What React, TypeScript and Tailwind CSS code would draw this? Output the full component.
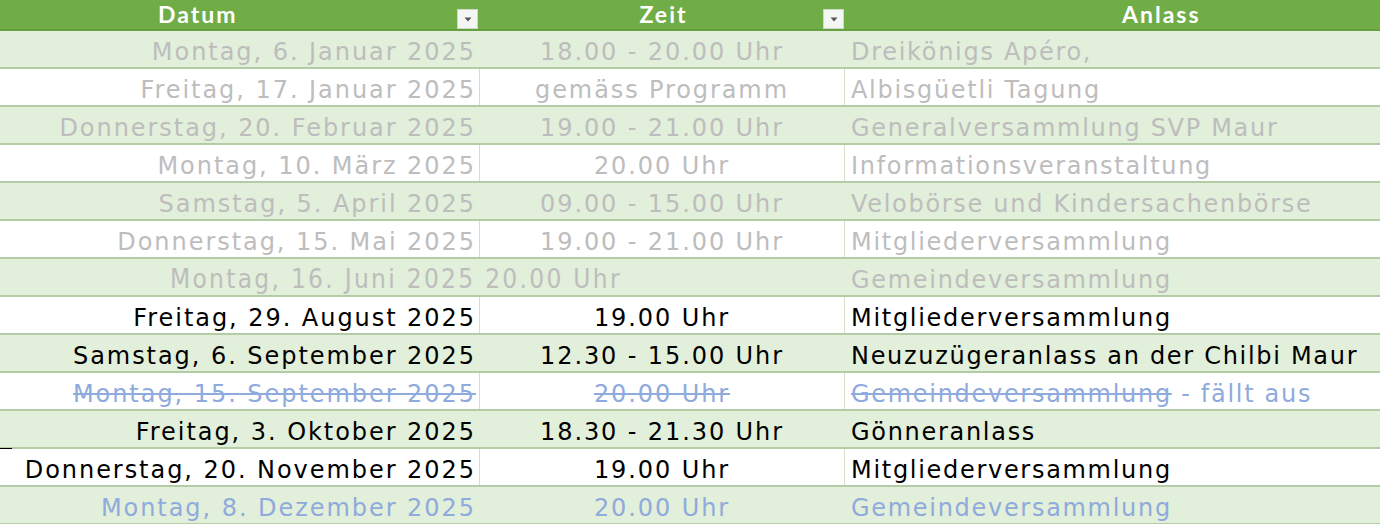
import React from "react";

type Row = {
  date: string;
  time: string;
  event: React.ReactNode;
  tone: "past" | "now" | "cancel" | "blue";
  green: boolean;
  merged?: boolean;
};

const rows: Row[] = [
  { date: "Montag, 6. Januar 2025", time: "18.00 - 20.00 Uhr", event: "Dreikönigs Apéro,", tone: "past", green: true },
  { date: "Freitag, 17. Januar 2025", time: "gemäss Programm", event: "Albisgüetli Tagung", tone: "past", green: false },
  { date: "Donnerstag, 20. Februar 2025", time: "19.00 - 21.00 Uhr", event: "Generalversammlung SVP Maur", tone: "past", green: true },
  { date: "Montag, 10. März 2025", time: "20.00 Uhr", event: "Informationsveranstaltung", tone: "past", green: false },
  { date: "Samstag, 5. April 2025", time: "09.00 - 15.00 Uhr", event: "Velobörse und Kindersachenbörse", tone: "past", green: true },
  { date: "Donnerstag, 15. Mai 2025", time: "19.00 - 21.00 Uhr", event: "Mitgliederversammlung", tone: "past", green: false },
  { date: "Montag, 16. Juni 2025 20.00 Uhr", time: "", event: "Gemeindeversammlung", tone: "past", green: true, merged: true },
  { date: "Freitag, 29. August 2025", time: "19.00 Uhr", event: "Mitgliederversammlung", tone: "now", green: false },
  { date: "Samstag, 6. September 2025", time: "12.30 - 15.00 Uhr", event: "Neuzuzügeranlass an der Chilbi Maur", tone: "now", green: true },
  {
    date: "Montag, 15. September 2025",
    time: "20.00 Uhr",
    event: (
      <>
        <span className="line-through decoration-[#8faadc]">Gemeindeversammlung</span>
        <span> - fällt aus</span>
      </>
    ),
    tone: "cancel",
    green: false,
  },
  { date: "Freitag, 3. Oktober 2025", time: "18.30 - 21.30 Uhr", event: "Gönneranlass", tone: "now", green: true },
  { date: "Donnerstag, 20. November 2025", time: "19.00 Uhr", event: "Mitgliederversammlung", tone: "now", green: false },
  { date: "Montag, 8. Dezember 2025", time: "20.00 Uhr", event: "Gemeindeversammlung", tone: "blue", green: true },
];

function toneClass(t: Row["tone"]) {
  if (t === "past") return "text-[#bdbdbd]";
  if (t === "now") return "text-black";
  return "text-[#8faadc]";
}

function Dropdown() {
  return (
    <div className="w-[21px] h-[20px] bg-[#f4f6f4] border border-[#d0d7cc] flex items-center justify-center">
      <svg width="8" height="5" viewBox="0 0 8 5">
        <path d="M0.5 0.5 L7.5 0.5 L4 4.5 Z" fill="#555" />
      </svg>
    </div>
  );
}

export default function App() {
  return (
    <div
      className="w-[1380px] h-[524px] overflow-hidden bg-white relative"
      style={{ fontFamily: '"DejaVu Sans", Verdana, sans-serif' }}
    >
      {/* header */}
      <div
        className="flex h-[31px] bg-[#70ad47] border-b-2 border-[#65a03f] text-white font-bold text-[23px] tracking-[2px]"
        style={{ fontFamily: 'Lato, "Open Sans", "Liberation Sans", sans-serif' }}
      >
        <div className="w-[480px] flex items-start relative">
          <span className="ml-[158px] leading-[28px]">Datum</span>
          <div className="absolute right-[2px] top-[9px]">
            <Dropdown />
          </div>
        </div>
        <div className="w-[365px] flex items-start justify-center relative">
          <span className="leading-[28px] ml-[2px]">Zeit</span>
          <div className="absolute right-[1px] top-[9px]">
            <Dropdown />
          </div>
        </div>
        <div className="flex-1 flex items-start">
          <span className="ml-[277px] leading-[28px]">Anlass</span>
        </div>
      </div>

      {rows.map((r, i) => {
        const bg = r.green ? "bg-[#e2efda]" : "bg-white";
        const vline = r.green ? "border-transparent" : "border-[#d3dfcc]";
        const tc = toneClass(r.tone);
        const strike = r.tone === "cancel" ? "line-through decoration-[#8faadc]" : "";
        return (
          <div
            key={i}
            className={`flex h-[38px] ${bg} border-b-2 border-[#b3cca5] text-[24px] tracking-[1.7px] leading-none whitespace-nowrap ${tc}`}
          >
            {r.merged ? (
              <div
                className="w-[845px] flex items-center pl-[170px] pt-[4px] text-[26px] tracking-[2.3px]"
                style={{ fontFamily: '"DejaVu Sans Condensed", "DejaVu Sans", sans-serif', fontStretch: "condensed" }}
              >
                {r.date}
              </div>
            ) : (
              <>
                <div className={`w-[480px] flex items-center justify-end pr-[3px] pt-[5px] tracking-[1.95px] border-r ${vline}`}>
                  <span className={strike}>{r.date}</span>
                </div>
                <div className={`w-[365px] flex items-center justify-center pt-[5px] tracking-[1.9px] border-r ${vline}`}>
                  <span className={strike}>{r.time}</span>
                </div>
              </>
            )}
            <div className="flex-1 flex items-center pl-[6px] pt-[5px]">
              <span>{r.event}</span>
            </div>
          </div>
        );
      })}

      <div className="absolute left-0 top-[448px] w-[12px] h-[1px] bg-black" />
    </div>
  );
}
